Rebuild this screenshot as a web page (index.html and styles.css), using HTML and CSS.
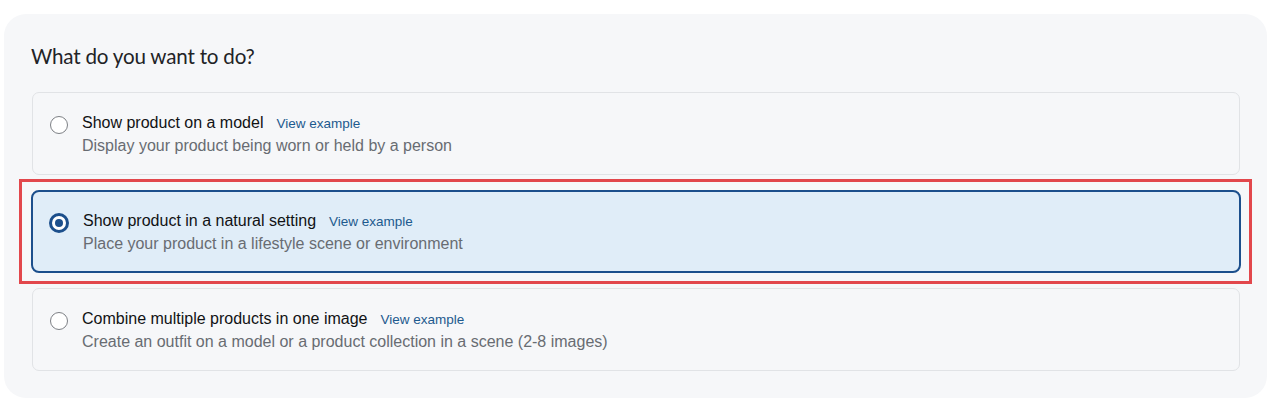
FILE: index.html
```html
<!DOCTYPE html>
<html lang="en">
<head>
<meta charset="utf-8">
<title>What do you want to do?</title>
<link rel="stylesheet" href="styles.css">
</head>
<body>
<div class="panel">
  <h2 class="heading">What do you want to do?</h2>
  <div class="options">
    <label class="option">
      <span class="radio"></span>
      <span class="text">
        <span class="title-row"><span class="title">Show product on a model</span><a class="link">View example</a></span>
        <span class="desc">Display your product being worn or held by a person</span>
      </span>
    </label>
    <label class="option selected">
      <span class="radio"><span class="dot"></span></span>
      <span class="text">
        <span class="title-row"><span class="title">Show product in a natural setting</span><a class="link">View example</a></span>
        <span class="desc">Place your product in a lifestyle scene or environment</span>
      </span>
    </label>
    <label class="option">
      <span class="radio"></span>
      <span class="text">
        <span class="title-row"><span class="title">Combine multiple products in one image</span><a class="link">View example</a></span>
        <span class="desc">Create an outfit on a model or a product collection in a scene (2-8 images)</span>
      </span>
    </label>
  </div>
</div>
</body>
</html>
```
FILE: styles.css
```css
* { box-sizing: border-box; }
html, body { margin: 0; background: #ffffff; }
body { padding: 14px 13px 13px 4px; font-family: "Liberation Sans", Arial, sans-serif; }

.panel {
  background: #f6f7f9;
  border-radius: 22px;
  padding: 28px 27px 26px 28px;
  height: 384px;
}

.heading {
  margin: 0 0 0 -1px;
  font-family: Lato, "Open Sans", sans-serif;
  font-weight: 400;
  font-size: 20.6px;
  line-height: 28px;
  color: #222326;
  letter-spacing: -0.2px;
}

.options {
  margin-top: 22px;
  display: flex;
  flex-direction: column;
  gap: 15px;
}

.option {
  position: relative;
  display: flex;
  align-items: flex-start;
  gap: 14px;
  height: 83px;
  padding: 20px 17px 0 17px;
  border: 1px solid #e1e3e6;
  border-radius: 7px;
  background: #f6f7f9;
}

.option.selected {
  margin: 0 -1px;
  padding: 19px 17px 0 17px;
  border: 2px solid #1c4f8c;
  background: #e0edf8;
  border-radius: 8px;
}

.option.selected::after {
  content: "";
  position: absolute;
  top: -13px;
  bottom: -13px;
  left: -14px;
  right: -13px;
  border: 3.5px solid #e2474c;
  pointer-events: none;
}

.radio {
  flex: none;
  width: 18px;
  height: 18px;
  margin-top: 3px;
  border-radius: 50%;
  border: 1.5px solid #7d8085;
  background: #ffffff;
  display: flex;
  align-items: center;
  justify-content: center;
}

.selected .radio {
  width: 20px;
  height: 20px;
  margin-top: 2px;
  margin-left: -1px;
  border: 3.5px solid #1c4f8c;
}

.dot {
  width: 8px;
  height: 8px;
  border-radius: 50%;
  background: #1c4f8c;
}

.text {
  display: flex;
  flex-direction: column;
  gap: 2px;
}

.title-row {
  display: flex;
  align-items: baseline;
  gap: 13px;
  line-height: 20px;
}

.title {
  font-size: 16px;
  color: #111214;
}

.link {
  font-size: 13.5px;
  color: #1d5a8e;
  text-decoration: none;
  cursor: pointer;
}

.desc {
  font-size: 16px;
  line-height: 20px;
  color: #686c72;
}
```
